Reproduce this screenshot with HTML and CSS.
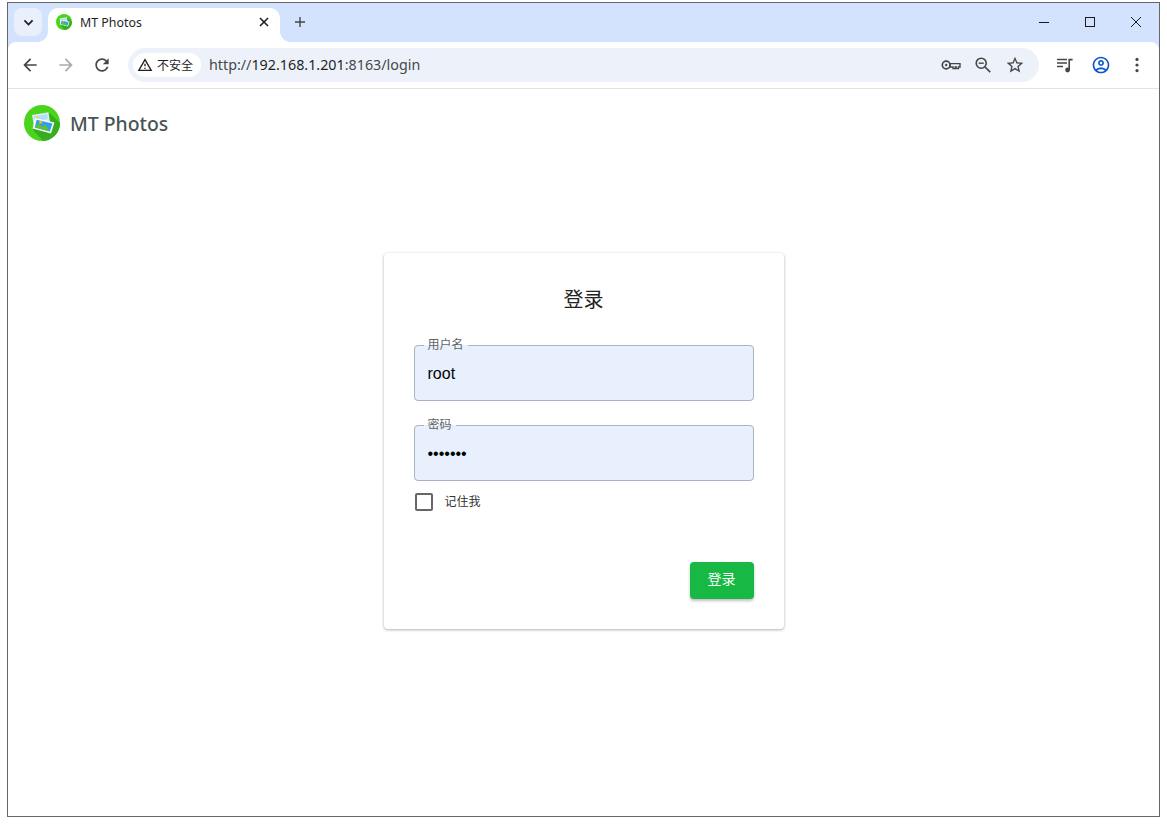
FILE: index.html
```html
<!DOCTYPE html>
<html lang="zh-CN">
<head>
<meta charset="utf-8">
<title>MT Photos</title>
<link rel="stylesheet" href="styles.css">
</head>
<body>
<svg class="defs" width="0" height="0" aria-hidden="true">
  <symbol id="logo" viewBox="0 0 36 36">
    <defs><clipPath id="disc"><circle cx="18" cy="18" r="18"/></clipPath></defs>
    <circle cx="18" cy="18" r="18" fill="#4ad41c"/>
    <path clip-path="url(#disc)" d="M9 25 25 7.5 38 20v18H21z" fill="#36ae1f"/>
    <path d="M8 10 24.5 7.3 26 18 10 20.5z" fill="#d9eef8"/>
    <path d="M9.6 11.4 23.2 9.1l.6 4.5L11 19z" fill="#b5def6"/>
    <circle cx="13.4" cy="12.6" r="1.3" fill="#f7cf5c"/>
    <path d="M11 13 30.4 17.5 27 28.4 8.6 23.6z" fill="#f8fcfd"/>
    <path d="M12.6 14.8 28.4 18.4 25.8 26.4 10.8 22.6z" fill="#2f9fec"/>
    <path d="M10.8 22.6 14.6 18.6 18.6 21.4 21.4 19.6 25.8 26.4z" fill="#5fbf3a"/>
    <circle cx="16.6" cy="17.2" r="1.5" fill="#f9b233"/>
  </symbol>
</svg>
<div class="window">
  <header class="browser">
    <div class="tabstrip">
      <button class="tab-search" type="button" aria-label="搜索标签页">
        <svg class="icon-16" viewBox="0 0 16 16"><path d="M3 5.5l5 5 5-5" fill="none" stroke="#1f1f1f" stroke-width="2.2"/></svg>
      </button>
      <div class="tab">
        <svg class="favicon"><use href="#logo"/></svg>
        <span class="tab-title">MT Photos</span>
        <svg class="tab-close" viewBox="0 0 10 10"><path d="M1 1l8 8M9 1l-8 8" stroke="#1f1f1f" stroke-width="1.6" fill="none"/></svg>
      </div>
      <svg class="new-tab" viewBox="0 0 12 12"><path d="M6 1v10M1 6h10" stroke="#444746" stroke-width="1.4" fill="none"/></svg>
      <div class="win-controls">
        <span class="win-btn"><svg viewBox="0 0 10 10"><path d="M0 5.5h10" stroke="#1a1a1a" fill="none"/></svg></span>
        <span class="win-btn"><svg viewBox="0 0 10 10"><rect x=".5" y=".5" width="9" height="9" stroke="#1a1a1a" fill="none"/></svg></span>
        <span class="win-btn"><svg viewBox="0 0 10 10"><path d="M0 0l10 10M10 0L0 10" stroke="#1a1a1a" fill="none"/></svg></span>
      </div>
    </div>
    <div class="toolbar">
      <span class="tool"><svg viewBox="0 0 24 24"><path fill="#444746" d="M20 11H7.83l5.59-5.59L12 4l-8 8 8 8 1.41-1.41L7.83 13H20v-2z"/></svg></span>
      <span class="tool"><svg viewBox="0 0 24 24"><path fill="#a8abad" d="M4 11h12.17l-5.59-5.59L12 4l8 8-8 8-1.41-1.41L16.17 13H4v-2z"/></svg></span>
      <span class="tool"><svg viewBox="0 0 24 24"><path fill="#444746" d="M17.65 6.35C16.2 4.9 14.21 4 12 4c-4.42 0-7.99 3.58-7.99 8s3.57 8 7.99 8c3.73 0 6.84-2.55 7.73-6h-2.08c-.82 2.33-3.04 4-5.65 4-3.31 0-6-2.69-6-6s2.69-6 6-6c1.66 0 3.14.69 4.22 1.78L13 11h7V4l-2.35 2.35z"/></svg></span>
      <div class="omnibox">
        <div class="chip">
          <svg class="chip-icon" viewBox="0 0 24 24"><path fill="#1f1f1f" d="M12 5.99 19.53 19H4.47L12 5.99M12 2 1 21h22L12 2zm1 14h-2v2h2v-2zm0-6h-2v4h2v-4z"/></svg>
          <span>不安全</span>
        </div>
        <div class="url"><span class="url-dim">http://</span>192.168.1.201<span class="url-dim">:8163/login</span></div>
        <div class="omni-actions">
          <svg class="omni-icon" viewBox="0 0 20 20"><circle cx="5.2" cy="10" r="3.9" fill="none" stroke="#444746" stroke-width="1.7"/><circle cx="5.2" cy="10" r="1.2" fill="#444746"/><path d="M9 8.6h10v3.4h-1.6v1.6h-2.2V12h-1v1.6H12V12H9z" fill="none" stroke="#444746" stroke-width="1.4"/></svg>
          <svg class="omni-icon" viewBox="0 0 20 20"><circle cx="8.2" cy="8.2" r="5" fill="none" stroke="#444746" stroke-width="1.6"/><path d="M12 12l5.2 5.2" stroke="#444746" stroke-width="1.7"/><path d="M5.7 8.2h5" stroke="#444746" stroke-width="1.4"/></svg>
          <svg class="omni-icon" viewBox="0 0 24 24"><path fill="#444746" d="M22 9.24l-7.19-.62L12 2 9.19 8.63 2 9.24l5.46 4.73L5.82 21 12 17.27 18.18 21l-1.63-7.03L22 9.24zM12 15.4l-3.76 2.27 1-4.28-3.32-2.88 4.38-.38L12 6.1l1.71 4.04 4.38.38-3.32 2.88 1 4.28L12 15.4z"/></svg>
        </div>
      </div>
      <span class="tool"><svg viewBox="0 0 20 20"><path d="M2 4.6h10M2 8h10M2 11.4h6" stroke="#444746" stroke-width="1.5" fill="none"/><circle cx="12.6" cy="15" r="2.4" fill="#444746"/><path d="M14.2 15V4.6h3.4" stroke="#444746" stroke-width="1.6" fill="none"/></svg></span>
      <span class="tool"><svg viewBox="0 0 24 24"><path fill="#0b57d0" d="M12 2C6.48 2 2 6.48 2 12s4.48 10 10 10 10-4.48 10-10S17.52 2 12 2zM7.35 18.5C8.66 17.56 10.26 17 12 17s3.34.56 4.65 1.5c-1.31.94-2.91 1.5-4.65 1.5s-3.34-.56-4.65-1.5zm10.79-1.38C16.45 15.8 14.32 15 12 15s-4.45.8-6.14 2.12C4.7 15.73 4 13.95 4 12c0-4.42 3.58-8 8-8s8 3.58 8 8c0 1.95-.7 3.73-1.86 5.12zM12 6c-1.93 0-3.5 1.57-3.5 3.5S10.07 13 12 13s3.5-1.57 3.5-3.5S13.93 6 12 6zm0 5c-.83 0-1.5-.67-1.5-1.5S11.17 8 12 8s1.5.67 1.5 1.5S12.83 11 12 11z"/></svg></span>
      <span class="tool"><svg viewBox="0 0 20 20"><circle cx="10" cy="4.4" r="1.6" fill="#444746"/><circle cx="10" cy="10" r="1.6" fill="#444746"/><circle cx="10" cy="15.6" r="1.6" fill="#444746"/></svg></span>
    </div>
  </header>
  <main class="page">
    <div class="brand">
      <svg class="brand-logo"><use href="#logo"/></svg>
      <span class="brand-name">MT Photos</span>
    </div>
    <form class="card">
      <h1 class="card-title">登录</h1>
      <fieldset class="field">
        <legend class="field-label">用户名</legend>
        <input class="field-input" type="text" value="root" readonly>
      </fieldset>
      <fieldset class="field field-second">
        <legend class="field-label">密码</legend>
        <input class="field-input" type="password" value="1234567" readonly>
      </fieldset>
      <label class="remember">
        <span class="checkbox"></span>
        <span class="remember-text">记住我</span>
      </label>
      <div class="actions">
        <button class="submit" type="button">登录</button>
      </div>
    </form>
  </main>
</div>
</body>
</html>
```
FILE: styles.css
```css
* { box-sizing: border-box; }
html, body { margin: 0; height: 100%; background: #fff; }
body {
  padding: 2px 7px 7px;
  font-family: "Noto Sans", "Noto Sans CJK SC", sans-serif;
  overflow: hidden;
}
.defs { position: absolute; }
.window {
  width: 1153px;
  height: 815px;
  border: 1px solid #666;
  display: flex;
  flex-direction: column;
  background: #fff;
}
.browser { background: #d3e3fd; }

.tabstrip { height: 39px; display: flex; align-items: flex-start; padding-left: 6px; }
.tab-search {
  width: 28px; height: 28px; margin-top: 5px; padding: 0; border: 0;
  border-radius: 8px; background: #e9effb;
  display: flex; align-items: center; justify-content: center;
}
.icon-16 { width: 13px; height: 13px; }
.tab {
  position: relative;
  width: 232px; height: 34px; margin: 5px 0 0 6px; padding: 0 11px 6px 8px;
  display: flex; align-items: center; gap: 8px;
  background: #fff; border-radius: 10px 10px 0 0;
}
.tab::before, .tab::after {
  content: ""; position: absolute; bottom: 0; width: 10px; height: 10px;
}
.tab::before { left: -10px; background: radial-gradient(circle at 0 0, transparent 9.5px, #fff 10px); }
.tab::after { right: -10px; background: radial-gradient(circle at 100% 0, transparent 9.5px, #fff 10px); }
.favicon { width: 16px; height: 16px; flex: none; }
.tab-title { flex: 1; font-size: 12.4px; color: #1f1f1f; white-space: nowrap; }
.tab-close { width: 10px; height: 10px; flex: none; }
.new-tab { width: 12px; height: 12px; margin: 13px 0 0 14px; }
.win-controls { display: flex; margin-left: auto; }
.win-btn { width: 46px; height: 39px; display: flex; align-items: center; justify-content: center; }
.win-btn svg { width: 10px; height: 10px; margin-top: -1px; }

.toolbar {
  height: 47px; padding: 0 4px;
  display: flex; align-items: center;
  background: #fff; border-radius: 8px 8px 0 0;
  border-bottom: 1px solid #e3e3e3;
}
.tool { width: 36px; height: 36px; flex: none; display: flex; align-items: center; justify-content: center; }
.tool svg { width: 20px; height: 20px; }
.omnibox {
  flex: 1; height: 34px; margin: 0 8px;
  display: flex; align-items: center;
  background: #edf2fa; border-radius: 17px; padding: 0 14px 0 5px;
}
.chip {
  height: 24px; width: 68px; flex: none;
  display: flex; align-items: center; justify-content: center; gap: 4px;
  background: #fff; border-radius: 12px; padding-right: 4px;
  font-size: 12px; color: #1f1f1f;
}
.chip-icon { width: 16px; height: 16px; }
.url { margin: -2px 0 0 8px; font-size: 14.3px; color: #1f1f1f; white-space: nowrap; }
.url-dim { color: #474747; }
.omni-actions { margin-left: auto; display: flex; gap: 12px; }
.omni-icon { width: 20px; height: 20px; }

.page { flex: 1; display: flex; flex-direction: column; align-items: center; }
.brand { align-self: flex-start; display: flex; align-items: center; gap: 10px; padding-left: 16px; height: 68px; margin-bottom: 2px; }
.brand-logo { width: 36px; height: 36px; }
.brand-name { font-size: 19.4px; font-weight: 500; color: #4a5355; }

.card {
  width: 400px; height: 376px; margin-top: 94px; padding: 0 30px;
  background: #fff; border-radius: 4px;
  box-shadow: 0 1px 3px rgba(0,0,0,.3), 0 0 2px rgba(0,0,0,.06);
}
.card-title { margin: 0; padding-top: 32px; height: 84px; text-align: center; font-size: 20px; line-height: 29px; font-weight: 400; color: #222; }
.field {
  margin: 0; padding: 0 13px; min-width: 0; height: 64px;
  border: 1px solid #aab2c4; border-radius: 4px; background: #e8f0fe;
}
.field-second { margin-top: 16px; }
.field-label { padding: 0 4px; margin-left: -4px; font-size: 12px; line-height: 16px; color: #5f6368; }
.field-input {
  display: block; width: 100%; height: 40px; padding: 0; margin-top: 1px; border: 0; outline: 0;
  background: transparent;
  font-family: "Liberation Sans", sans-serif; font-size: 16px; color: #000;
}
.remember { display: flex; align-items: center; gap: 12px; margin: 12px 0 0 1px; font-size: 12px; color: #333; height: 18px; }
.remember-text { margin-top: -2px; }
.checkbox { width: 18px; height: 18px; border: 2px solid #666; border-radius: 2px; }
.actions { display: flex; justify-content: flex-end; margin-top: 51px; }
.submit {
  width: 64px; height: 37px; padding: 0 0 6px; border: 0; border-radius: 4px;
  background: #18b845; color: #fff; font-family: inherit; font-size: 14px;
  box-shadow: 0 2px 3px rgba(0,0,0,.25);
}
```
